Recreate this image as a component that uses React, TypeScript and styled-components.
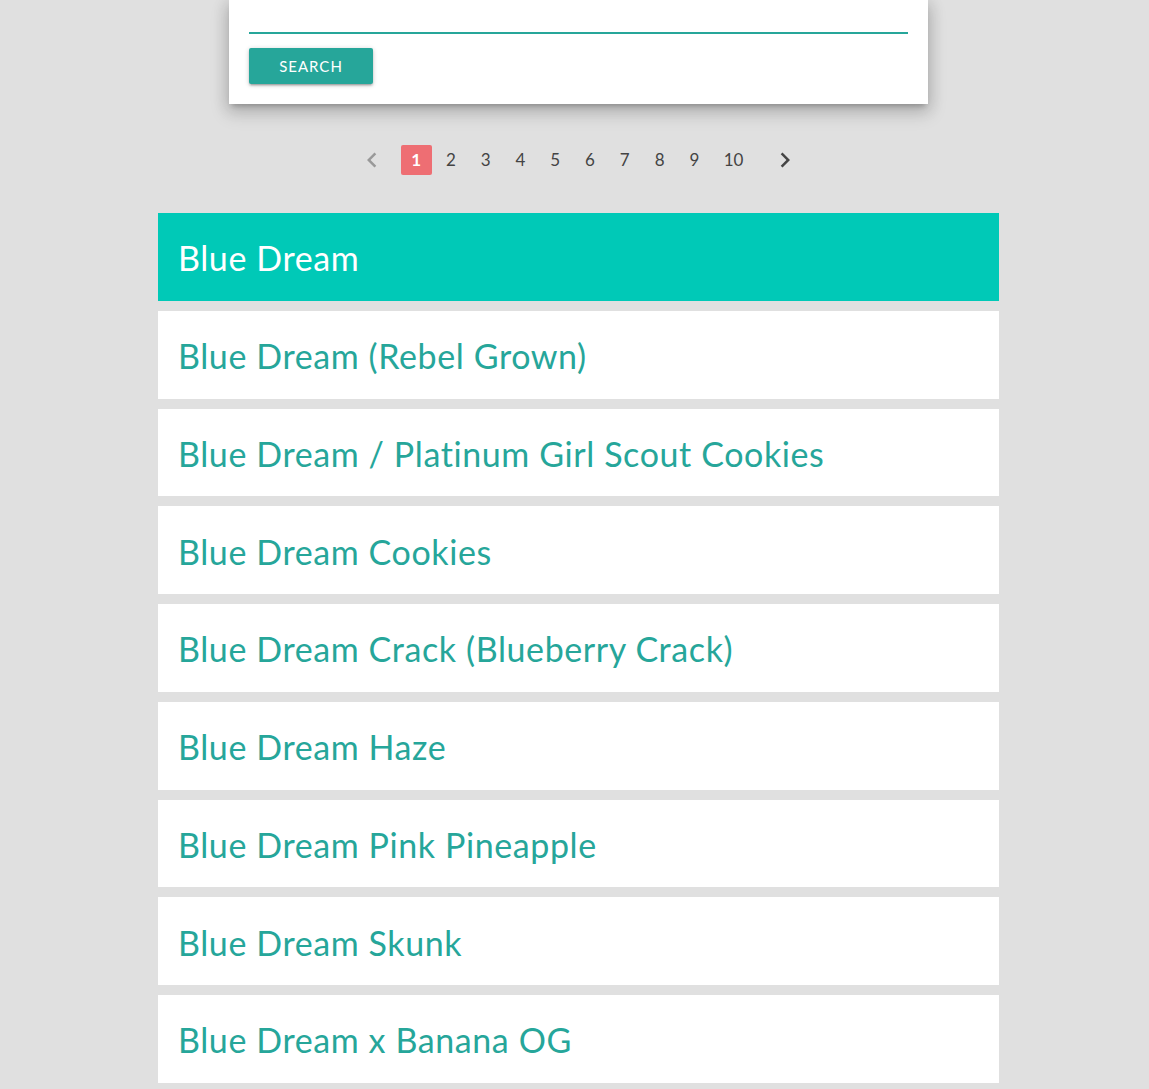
import React from "react";
import styled, { createGlobalStyle } from "styled-components";

const Global = createGlobalStyle`
  html, body { margin: 0; padding: 0; background: #e0e0e0; }
  body { font-family: "Lato", "Noto Sans", sans-serif; overflow: hidden; }
`;

const Page = styled.div`
  padding-left: 8px;
  display: flex;
  flex-direction: column;
  align-items: center;
  min-height: 1089px;
`;

const Card = styled.div`
  width: 699px;
  box-sizing: border-box;
  background: #fff;
  padding: 0 20px 20px;
  box-shadow: 0 8px 17px 2px rgba(0,0,0,.14), 0 3px 14px 2px rgba(0,0,0,.12), 0 5px 5px -3px rgba(0,0,0,.2);
`;

const Input = styled.input`
  display: block;
  width: 100%;
  box-sizing: border-box;
  height: 34px;
  border: none;
  border-bottom: 2px solid #26a69a;
  outline: none;
  background: transparent;
  font: inherit;
  margin: 0 0 14px;
  padding: 0;
`;

const Button = styled.button`
  width: 124px;
  height: 36px;
  border: none;
  border-radius: 2px;
  background: #26a69a;
  color: #fff;
  font-family: "Lato", sans-serif;
  font-size: 15px;
  font-weight: 400;
  letter-spacing: 1px;
  text-transform: uppercase;
  padding: 0;
  box-shadow: 0 2px 2px 0 rgba(0,0,0,.14), 0 3px 1px -2px rgba(0,0,0,.12), 0 1px 5px 0 rgba(0,0,0,.2);
  cursor: pointer;
`;

const Pager = styled.ul`
  list-style: none;
  display: flex;
  align-items: center;
  margin: 41px 0 38px;
  padding: 0;
  height: 30px;
`;

const PageItem = styled.li<{ $active?: boolean }>`
  height: 30px;
  line-height: 30px;
  padding: 0 10px;
  margin: 0 1.9px;
  min-width: 11px;
  text-align: center;
  border-radius: 2px;
  font-size: 17px;
  font-weight: ${p => (p.$active ? 700 : 400)};
  color: ${p => (p.$active ? "#fff" : "#444")};
  background: ${p => (p.$active ? "#ee6e73" : "transparent")};
`;

const Arrow = styled.li<{ $disabled?: boolean }>`
  width: 30px;
  height: 30px;
  display: flex;
  align-items: center;
  justify-content: center;
  margin: ${p => (p.$disabled ? "0 12px" : "0 12px 0 15px")};
  color: ${p => (p.$disabled ? "#999" : "#444")};
`;

const List = styled.div`
  width: 841px;
  display: flex;
  flex-direction: column;
  gap: 10px;
`;

const Item = styled.div<{ $active?: boolean }>`
  height: 87.75px;
  box-sizing: border-box;
  display: flex;
  align-items: center;
  padding: 2px 20px 0;
  background: ${p => (p.$active ? "#00c9b7" : "#fff")};
  color: ${p => (p.$active ? "#fff" : "#26a69a")};
  font-family: "Lato", "Noto Sans", sans-serif;
  font-size: 34px;
  letter-spacing: 0.6px;
  white-space: nowrap;
`;

const Chevron = ({ dir }: { dir: "left" | "right" }) => (
  <svg width="30" height="30" viewBox="0 0 24 24" fill="currentColor">
    {dir === "left" ? (
      <path d="M15.41 7.41 14 6l-6 6 6 6 1.41-1.41L10.83 12z" />
    ) : (
      <path d="M10 6 8.59 7.41 13.17 12l-4.58 4.59L10 18l6-6z" />
    )}
  </svg>
);

const strains = [
  "Blue Dream",
  "Blue Dream (Rebel Grown)",
  "Blue Dream / Platinum Girl Scout Cookies",
  "Blue Dream Cookies",
  "Blue Dream Crack (Blueberry Crack)",
  "Blue Dream Haze",
  "Blue Dream Pink Pineapple",
  "Blue Dream Skunk",
  "Blue Dream x Banana OG",
];

export default function App() {
  return (
    <>
      <Global />
      <Page>
        <Card>
          <Input />
          <Button>Search</Button>
        </Card>
        <Pager>
          <Arrow $disabled><Chevron dir="left" /></Arrow>
          {[1, 2, 3, 4, 5, 6, 7, 8, 9, 10].map(n => (
            <PageItem key={n} $active={n === 1}>{n}</PageItem>
          ))}
          <Arrow><Chevron dir="right" /></Arrow>
        </Pager>
        <List>
          {strains.map((s, i) => (
            <Item key={s} $active={i === 0}>{s}</Item>
          ))}
        </List>
      </Page>
    </>
  );
}
